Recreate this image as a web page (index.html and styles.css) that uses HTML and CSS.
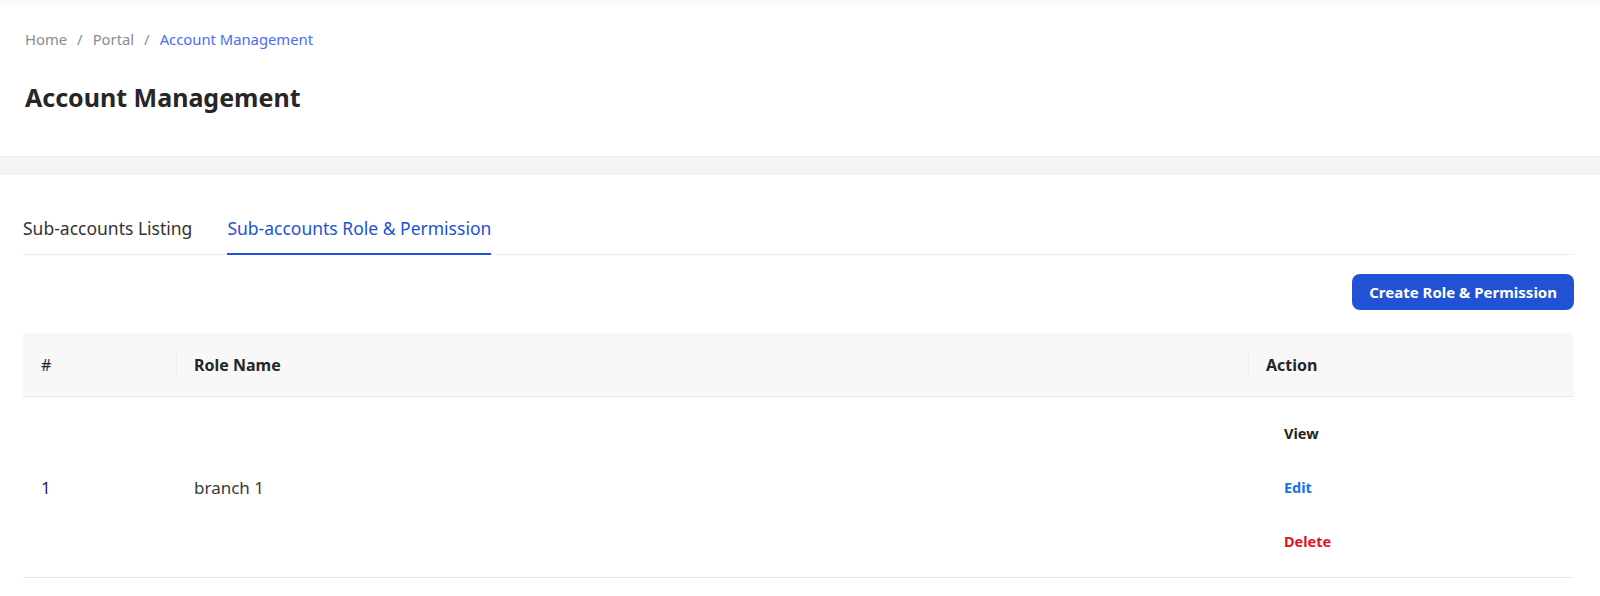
FILE: index.html
```html
<!DOCTYPE html>
<html lang="en">
<head>
  <meta charset="UTF-8">
  <meta name="viewport" content="width=device-width, initial-scale=1.0">
  <title>Account Management</title>
  <link rel="stylesheet" href="styles.css">
</head>
<body>
  <header class="page-header">
    <nav class="breadcrumb">
      <span>Home</span>
      <span class="sep">/</span>
      <span>Portal</span>
      <span class="sep">/</span>
      <span class="current">Account Management</span>
    </nav>
    <h1>Account Management</h1>
  </header>

  <main class="content">
    <div class="tabs">
      <div class="tab">Sub-accounts Listing</div>
      <div class="tab active">Sub-accounts Role &amp; Permission</div>
    </div>

    <div class="toolbar">
      <button class="btn-primary">Create Role &amp; Permission</button>
    </div>

    <table class="roles">
      <thead>
        <tr>
          <th class="col-no">#</th>
          <th class="col-name">Role Name</th>
          <th class="col-action">Action</th>
        </tr>
      </thead>
      <tbody>
        <tr>
          <td class="col-no num">1</td>
          <td class="col-name">branch 1</td>
          <td class="col-action">
            <div class="actions">
              <a class="link-view">View</a>
              <a class="link-edit">Edit</a>
              <a class="link-delete">Delete</a>
            </div>
          </td>
        </tr>
      </tbody>
    </table>
  </main>
</body>
</html>
```

FILE: styles.css
```css
body { margin: 0; font-family: "Noto Sans", "Liberation Sans", sans-serif; color: #262626; background: #f4f4f4; }

.page-header { background: #fff; padding: 28px 25px 42px; box-shadow: inset 0 6px 6px -4px rgba(0,0,0,0.04); border-bottom: 1px solid #ececec; }
.breadcrumb { font-size: 14.8px; color: #8c8c8c; display: flex; gap: 10px; line-height: 22px; }
.breadcrumb .current { color: #4a6cf7; }
.page-header h1 { margin: 30px 0 0; font-size: 25px; font-weight: 700; color: #262626; line-height: 34px; }

.content { background: #fff; margin-top: 18px; padding: 34px 26px 30px 23px; }

.tabs { display: flex; gap: 35px; border-bottom: 1px solid #ececec; }
.tab { font-size: 17.5px; color: #333; padding: 7px 0 13px; border-bottom: 2px solid transparent; margin-bottom: -1px; }
.tab.active { color: #2152d6; border-bottom-color: #2152d6; }

.toolbar { display: flex; justify-content: flex-end; padding: 19px 0 23px; }
.btn-primary { background: #2152d6; color: #fff; border: none; border-radius: 8px; height: 36px; padding: 0 17px; font: 700 15px "Noto Sans", "Liberation Sans", sans-serif; cursor: pointer; }

.roles { width: 100%; border-collapse: collapse; font-size: 17px; }
.roles th { background: #f8f8f8; text-align: left; font-size: 16px; font-weight: 700; height: 63px; padding: 0 18px; position: relative; border-bottom: 1px solid #e8e8e8; color: #262626; }
.roles th.col-no { font-weight: 400; }
.roles th + th::before { content: ""; position: absolute; left: 0; top: 18px; bottom: 18px; width: 1px; background: #ececec; }
.roles td { height: 180px; padding: 0 18px; border-bottom: 1px solid #e8e8e8; color: #3a3a3a; }
.col-no { width: 117px; }
.col-action { width: 290px; }
.roles td.num { color: #242466; }

.actions { display: flex; flex-direction: column; gap: 34px; padding-left: 18px; }
.actions a { font-size: 14.5px; font-weight: 700; line-height: 20px; cursor: pointer; }
.link-view { color: #222; }
.link-edit { color: #1a73e8; }
.link-delete { color: #e0141e; }
```
